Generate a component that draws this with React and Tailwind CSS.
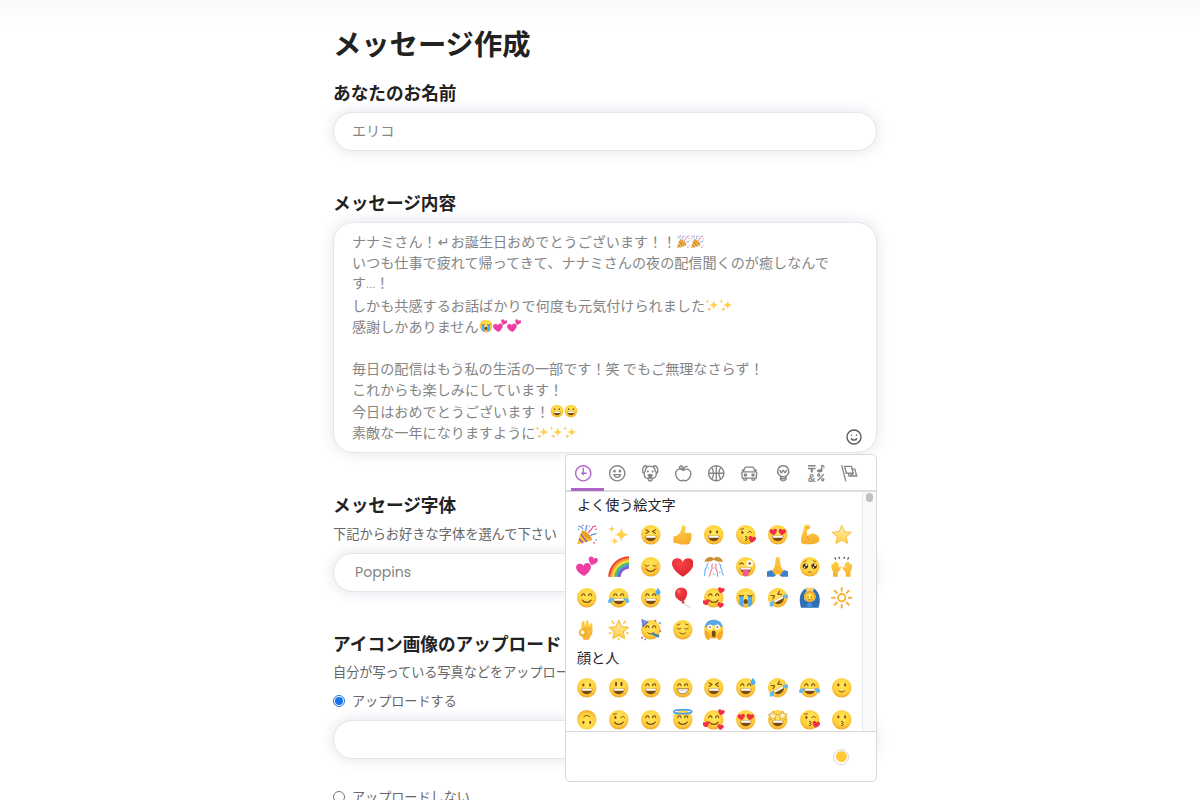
import { useState } from 'react';
import clsx from 'clsx';

const INK = '#7a4a0e';
const HEART = 'M0 5.200C-8 .3-6.500-4.800-3-4.800-1.500-4.800-.4-4 0-2.800.4-4 1.500-4.800 3-4.800 6.500-4.800 8 .3 0 5.200z';
const STAR = 'M16 2l4.100 9.300 10.200 1.100-7.600 6.800 2.100 9.900L16 24l-8.800 5.100 2.100-9.900-7.600-6.800 10.200-1.100z';

function Heart({ x, y, s = 1, r = 0, fill = '#ee2f45' }) {
  return <path d={HEART} fill={fill} transform={`translate(${x} ${y}) rotate(${r}) scale(${s})`} />;
}

function Line({ d, w = 1.6, color = INK }) {
  return <path d={d} fill="none" stroke={color} strokeWidth={w} strokeLinecap="round" strokeLinejoin="round" />;
}

const eyes = {
  dots: (
    <g fill={INK}>
      <ellipse cx="11" cy="12" rx="1.6" ry="2.2" />
      <ellipse cx="21" cy="12" rx="1.6" ry="2.2" />
    </g>
  ),
  tall: (
    <g fill={INK}>
      <ellipse cx="12" cy="10.5" rx="1.6" ry="3.6" />
      <ellipse cx="20" cy="10.5" rx="1.6" ry="3.6" />
    </g>
  ),
  happy: <Line d="M8.500 13c1-4 4-4 5 0M18.500 13c1-4 4-4 5 0" />,
  closed: <Line d="M7.500 13.500c1.500 2.400 4.500 2.400 6 0M18.500 13.500c1.500 2.400 4.500 2.400 6 0" w={1.4} />,
  squint: <Line d="M9 8.500l4.500 2.700L9 14M23 8.500l-4.500 2.700L23 14" />,
  wink: (
    <g>
      <ellipse cx="11" cy="12.500" rx="1.600" ry="2.200" fill={INK} />
      <Line d="M19 13c1.500-2.500 4-2.500 5.500-.5M8.500 8l4-1" w={1.4} />
    </g>
  ),
  hearts: (
    <g>
      <Heart x={9.5} y={12} s={0.95} r={-8} />
      <Heart x={22.5} y={12} s={0.95} r={8} />
    </g>
  ),
  stars: (
    <g fill="#fff3c4" stroke="#c98a20" strokeWidth="2">
      <path d={STAR} transform="translate(1 2) scale(.48)" />
      <path d={STAR} transform="translate(15.500 2) scale(.48)" />
    </g>
  ),
};

const mouths = {
  grin: (
    <g>
      <path d="M7.500 17.500h17c0 4.500-3.500 8-8.500 8s-8.500-3.500-8.500-8z" fill={INK} />
      <path d="M8.500 17.500h15v3h-15z" fill="#fff" />
    </g>
  ),
  teeth: (
    <path d="M7.500 17.500h17c0 4.500-3.500 7.500-8.500 7.500s-8.500-3-8.500-7.500z" fill="#fff" stroke={INK} strokeWidth="1" />
  ),
  smile: <Line d="M9.500 19.500c3 4.500 10 4.500 13 0" />,
  small: <Line d="M11.500 20.500c2 2.500 7 2.500 9 0" w={1.4} />,
  kiss: <Line d="M15.500 18.500c3.500 0 3.500 2.500.5 3 3 .5 3 3-.5 3.200" w={1.4} />,
};

function Face({ eye, mouth, flip, children }) {
  return (
    <g>
      <g transform={flip ? 'rotate(180 16 16)' : undefined}>
        <circle cx="16" cy="16" r="14.500" fill="url(#face)" />
        {eyes[eye]}
        {mouths[mouth]}
      </g>
      {children}
    </g>
  );
}

function Tears() {
  return (
    <g fill="#62b8f2">
      <path d="M8.500 16.500c-5-.5-8.700 2-8.500 5 .2 3 5 3 6.300.5z" />
      <path d="M23.500 16.500c5-.5 8.700 2 8.500 5-.2 3-5 3-6.300.5z" />
    </g>
  );
}

function Sparkle({ x, y, s }) {
  return (
    <path
      d="M0-10C1-3 3-1 10 0 3 1 1 3 0 10-1 3-3 1-10 0-3-1-1-3 0-10z"
      fill="#ffcf4d"
      transform={`translate(${x} ${y}) scale(${s})`}
    />
  );
}

const emojis = {
  '😀': <Face eye="dots" mouth="grin" />,
  '😃': <Face eye="tall" mouth="grin" />,
  '😄': <Face eye="happy" mouth="grin" />,
  '😁': (
    <Face eye="happy" mouth="teeth">
      <Line d="M8.500 20.500h15" w={0.8} color="#c8b79d" />
    </Face>
  ),
  '😆': <Face eye="squint" mouth="grin" />,
  '😅': (
    <Face eye="happy" mouth="grin">
      <path d="M26.500 1c3 4 4.500 6 4 8-1 4-7 3.500-7.500 0-.2-2 1.500-4 3.500-8z" fill="#4eb0f2" />
    </Face>
  ),
  '😂': (
    <Face eye="happy" mouth="grin">
      <Tears />
    </Face>
  ),
  '🤣': (
    <g transform="rotate(-28 16 16)">
      <Face eye="squint" mouth="grin" />
      <Tears />
    </g>
  ),
  '🙂': <Face eye="dots" mouth="small" />,
  '🙃': <Face eye="dots" mouth="small" flip />,
  '😉': <Face eye="wink" mouth="smile" />,
  '😊': <Face eye="happy" mouth="smile" />,
  '☺️': (
    <Face eye="closed" mouth="smile">
      <g fill="#f58b45" opacity=".55">
        <circle cx="7.500" cy="18.500" r="2.600" />
        <circle cx="24.500" cy="18.500" r="2.600" />
      </g>
    </Face>
  ),
  '😌': (
    <Face eye="closed" mouth="small">
      <Line d="M8 9l4-1.500M24 9l-4-1.500" w={1.2} />
    </Face>
  ),
  '😇': (
    <Face eye="happy" mouth="smile">
      <ellipse cx="16" cy="4" rx="13.500" ry="3" fill="none" stroke="#4a9fe8" strokeWidth="2.500" />
    </Face>
  ),
  '🥰': (
    <Face eye="happy" mouth="smile">
      <Heart x={27} y={5} s={0.85} r={15} />
      <Heart x={4.5} y={23} s={0.85} r={-15} />
      <Heart x={26} y={27} s={0.8} r={10} />
    </Face>
  ),
  '😍': <Face eye="hearts" mouth="grin" />,
  '🤩': <Face eye="stars" mouth="grin" />,
  '😘': (
    <Face eye="wink" mouth="kiss">
      <Heart x={25.5} y={23} s={0.95} r={10} />
    </Face>
  ),
  '😗': <Face eye="dots" mouth="kiss" />,
  '😜': (
    <Face mouth="grin">
      <Line d="M7 12c1.500-2 4-2 5.500 0" />
      <circle cx="22" cy="11" r="4.800" fill="#fff" />
      <circle cx="22" cy="11" r="1.800" fill={INK} />
      <path d="M11.500 20h9v6.500c0 5-9 5-9 0z" fill="#f15b8e" />
    </Face>
  ),
  '🥺': (
    <Face>
      <g fill="#4f2e12">
        <circle cx="9.500" cy="15" r="4" />
        <circle cx="22.500" cy="15" r="4" />
      </g>
      <g fill="#fff">
        <circle cx="11" cy="13.300" r="1.500" />
        <circle cx="24" cy="13.300" r="1.500" />
        <circle cx="8.300" cy="16.800" r="1" />
        <circle cx="21.300" cy="16.800" r="1" />
      </g>
      <Line d="M7 8.500c2-.3 3-1 4-2M25 8.500c-2-.3-3-1-4-2M13.500 24.500c1.500-1.500 3.500-1.500 5 0" w={1.3} />
    </Face>
  ),
  '😭': (
    <Face>
      <path d="M6.500 13.500h6v16c-3-.5-6-3-6-6zM19.500 13.500h6v10c0 3-3 5.500-6 6z" fill="#4eaaf0" />
      <Line d="M6.500 12.500c2 1 4.500 1 6.500 0M19 12.500c2 1 4.500 1 6.500 0" />
      <ellipse cx="16" cy="21.500" rx="3.300" ry="3.800" fill={INK} />
    </Face>
  ),
  '🥳': (
    <Face eye="happy" mouth="small">
      <path d="M2 0l11 4-9 9z" fill="#5c6fd6" />
      <path d="M3.500 4l5-1.500M3.500 8l6.500-4" stroke="#9aa8f0" strokeWidth="1.500" />
      <path d="M18 20l11 4-1 4-11-5z" fill="#3f7fc4" />
      <g fill="#e84d6c">
        <circle cx="23" cy="2.500" r="1.500" />
        <circle cx="3" cy="28" r="1.500" />
        <circle cx="30" cy="18" r="1.300" />
      </g>
      <g fill="#3f9be0">
        <circle cx="29.500" cy="6" r="1.500" />
        <circle cx="8" cy="30.500" r="1.300" />
      </g>
    </Face>
  ),
  '😱': (
    <g>
      <circle cx="16" cy="15" r="14" fill="url(#face)" />
      <path d="M2.500 13C4 4 9 1 16 1s12 3 13.500 12c-6-5-21-5-27 0z" fill="#5aa8e6" />
      <circle cx="10.500" cy="12" r="3.800" fill="#fff" />
      <circle cx="21.500" cy="12" r="3.800" fill="#fff" />
      <circle cx="10.500" cy="12" r="1.300" fill={INK} />
      <circle cx="21.500" cy="12" r="1.300" fill={INK} />
      <ellipse cx="16" cy="22" rx="3" ry="5" fill={INK} />
      <path d="M2 18c3-1 7 2 8 6v7H6c-3-3-4-8-4-13zM30 18c-3-1-7 2-8 6v7h4c3-3 4-8 4-13z" fill="#f5ac27" />
    </g>
  ),
  '🎉': (
    <g>
      <path d="M1.500 30.500L8.500 10C16 12 21 17 23.500 24z" fill="#fbbd35" />
      <path d="M7 15l9.500 11.500M4.500 22l6 6.500" stroke="#7a4fc0" strokeWidth="1.800" />
      <path d="M8.500 10c4-2 16 8 15 14-5 0-14-7-15-14z" fill="#e8a02a" />
      <Line d="M14 10c3-2 0-5 2-8" w={1.8} color="#5b8fe8" />
      <Line d="M19 13c0-4 4-3 5-7s4-2 5-3" w={1.8} color="#e8497c" />
      <Line d="M22 17c3-3 5 0 8-3" w={1.8} color="#5b8fe8" />
      <Line d="M4 3c3 0 4 2 6 4" w={1.8} color="#3f9be8" />
      <g fill="#4aa5ef">
        <circle cx="20" cy="3" r="1.200" />
        <circle cx="4" cy="8" r="1.200" />
        <circle cx="30" cy="24" r="1.200" />
      </g>
      <g fill="#ef4c62">
        <circle cx="27" cy="28" r="1.300" />
        <circle cx="10" cy="2" r="1.200" />
        <circle cx="30" cy="8" r="1.200" />
      </g>
    </g>
  ),
  '✨': (
    <g>
      <Sparkle x={20} y={16} s={1.15} />
      <Sparkle x={5.500} y={7.500} s={0.55} />
      <Sparkle x={10} y={25.500} s={0.6} />
    </g>
  ),
  '👍': (
    <g>
      <path
        d="M2 18.500l5.500-1.500c3-2 5-5 6.500-9l1.500-6c3-1 5 1 4.800 4.500L19 13h7.500c3.500 0 4 3.500 1.800 4.700 1.700 1.500 1.200 4-.5 4.700 1.200 1.700.4 3.800-1.300 4.400.3 2.200-1 3.700-3.500 3.700h-8.500c-3 0-5-1.500-7.500-2L2 28z"
        fill="url(#hand)"
      />
      <Line d="M20.500 17.700h7M21 22.300h6M20.500 26.700h5.500" w={0.9} color="#e09a25" />
    </g>
  ),
  '💪': (
    <g>
      <path
        d="M7 8c-.5-3.500 1-6.500 4-7 3.500-.5 6 1.500 5.500 5-.5 2.500-3.500 2-4.500 3.500-.5 3 .5 6 .5 9 4-4.500 9-5.500 13.500-2.500 4.500 3 5 7 3.500 10.500-6 4.500-17 4.500-25.500 2.500C1.500 23 4.500 15.500 7 8z"
        fill="url(#hand)"
      />
      <Line d="M12.500 18.500c-.3 2 .5 3.500 2 4.500M11 6c2-1 3-1 4-.5" w={1.1} color="#dd9524" />
    </g>
  ),
  '⭐': <path d={STAR} fill="url(#star)" stroke="#f4bd48" strokeWidth="1.400" strokeLinejoin="round" />,
  '🌟': (
    <g>
      <path d={STAR} fill="url(#star)" stroke="#f9c03c" strokeWidth="1.800" strokeLinejoin="round" />
      <Line d="M6 3l2.500 3.500M26 3l-2.500 3.500M16 28.500v2.500M2 21.500l2.500-1M30 21.500l-2.500-1" w={2} color="#ffb93a" />
    </g>
  ),
  '💕': (
    <g>
      <Heart x={11.5} y={20} s={1.9} r={-5} fill="#ee3fa5" />
      <Heart x={25} y={7.500} s={1.2} r={18} fill="#ee3fa5" />
    </g>
  ),
  '🌈': (
    <g fill="none" strokeWidth="3.400">
      <path d="M2 31C3 14 15 3 31.500 2" stroke="#ed4237" />
      <path d="M5 31C6 16 17 6 31.500 5" stroke="#f99a2b" />
      <path d="M8 31C9 18 19 9 31.500 8" stroke="#fbdd3e" />
      <path d="M11 31c1-11 9-19 20.500-20" stroke="#54bd55" />
      <path d="M14 31c1-9 8-16 17.500-17" stroke="#3f91e5" />
      <path d="M17 31c1-8 6-13 14.500-14" stroke="#8c57c7" />
    </g>
  ),
  '❤️': <Heart x={16} y={16.5} s={2.75} fill="url(#heart)" />,
  '🎊': (
    <g>
      <path d="M2 8c2-5 7-8 12-6l2 2 2-2c5-2 10 1 12 6-4 1-8 1-11-1l-3-1-3 1c-3 2-7 2-11 1z" fill="#c9923a" />
      <Line d="M8 11c-4 3-1 5-4 8s0 6-2 10M24 11c4 3 1 5 3 8s1 6 3 9" w={1.7} color="#6cb2f0" />
      <Line d="M14 12c-3 4 2 6-2 10-2 2 0 5-3 8M19 12c2 4-2 6 1 9s0 6 2 9" w={1.7} color="#f07a92" />
      <g fill="#9fb9e0">
        <circle cx="16" cy="18" r="1.200" />
        <circle cx="16" cy="27" r="1.300" />
        <circle cx="25" cy="24" r="1.200" />
        <circle cx="8" cy="18" r="1.200" />
      </g>
    </g>
  ),
  '🙏': (
    <g>
      <path
        d="M15.800 1c-1.800 0-2.600 1-2.800 3l-1.500 11-4.500 9 5 6 3.800-4zM16.200 1c1.800 0 2.600 1 2.800 3l1.500 11 4.500 9-5 6-3.800-4z"
        fill="url(#hand)"
      />
      <path d="M15.700 3h.6v23h-.6z" fill="#d98f20" />
      <path d="M0 23l7-2 5.500 8-2 2H0zM32 23l-7-2-5.500 8 2 2H32z" fill="#3b82c9" />
    </g>
  ),
  '🙌': (
    <g>
      <g fill="url(#hand)">
        <path d="M1 12c1-1 2 0 2.500 1L4 10c1-2 2.500-1 2.500.5V9C8 7.500 9 8.500 9 10v1c1.500-1.500 2.500 0 2.500 1.500V18l2-2c1.500-.5 2 .5 1.500 2-1.500 3-3 5-5 6v7H3v-8c-3-4-2.500-7-2-11z" />
        <path d="M31 12c-1-1-2 0-2.500 1L28 10c-1-2-2.500-1-2.500.5V9C24 7.500 23 8.500 23 10v1c-1.500-1.500-2.500 0-2.500 1.500V18l-2-2c-1.500-.5-2 .5-1.500 2 1.500 3 3 5 5 6v7h7v-8c3-4 2.500-7 2-11z" />
      </g>
      <Line d="M7 4.500L6 2.800M12.500 3.500L12 1.800M19.500 3.500l.5-1.700M25 4.500l1-1.700" w={1.8} color="#444" />
    </g>
  ),
  '🎈': (
    <g>
      <path d="M14 1c6 0 9 4 8.500 9.500C22 16 18.500 20.500 16 22 9 20 4 15 4.500 9.500 5 4 8 1 14 1z" fill="url(#heart)" />
      <path d="M14.500 21.500h3.500l1 2.500h-4z" fill="#cf1f2e" />
      <Line d="M17 24c3 1 2 4 5 4s4 1 5 3" w={1.1} color="#b9b9b9" />
      <ellipse cx="10" cy="6.500" rx="2" ry="2.800" fill="#ff9a94" opacity=".6" />
    </g>
  ),
  '🙆': (
    <g>
      <path d="M10 2C1 8-1 18 3 31h26c4-13 2-23-7-29l-2 4c5 4 6 9 3 14H9C6 15 7 10 12 6z" fill="#2f6fb5" />
      <circle cx="16" cy="14" r="8.500" fill="#e3a32c" />
      <circle cx="16" cy="15.500" r="6.800" fill="url(#face)" />
      <path d="M9 3c1-3 4-3 7-1 3-2 6-2 7 1l-3 3h-8z" fill="#fbcf6a" />
      <path d="M12 26l4-4 4 4v5h-8z" fill="#4990d9" />
      <circle cx="13.500" cy="15" r="1" fill={INK} />
      <circle cx="18.500" cy="15" r="1" fill={INK} />
      <Line d="M13.500 18.500c1.500 1.300 3.500 1.300 5 0" w={1} />
    </g>
  ),
  '🔆': (
    <g>
      <circle cx="16" cy="16" r="5.500" fill="none" stroke="#f6b03c" strokeWidth="2.800" />
      <Line
        d="M16 1.500v4M16 26.500v4M1.500 16h4M26.500 16h4M5.700 5.700l3 3M23.300 23.300l3 3M5.700 26.300l3-3M23.300 8.700l3-3"
        w={3}
        color="#f6b03c"
      />
    </g>
  ),
  '👌': (
    <g>
      <path
        d="M9 14C7 9 8.500 4 10.500 2.500c2-.5 2 2 2.500 5l1.500 5C14 8 14.500 3 16.500 1.500c2-.5 2 3 2.500 6l.5 5c.5-3 1.500-6 3.500-6.500 2 .5 1 4 1.500 8 .5 5 0 9-3 12L19 31h-8l-1-4c-3-1-6-3-6-6.500C4 16 7 14.500 9 14z"
        fill="url(#hand)"
      />
      <circle cx="9.800" cy="20" r="2.600" fill="#fff" />
      <Line d="M9 14c3 0 6 1.500 6.500 4 .3 3-1 6-4 7M14.500 12.500l1 3M19.500 12.500l-.3 3" w={0.9} color="#dd9524" />
    </g>
  ),
};

function Emoji({ name, className }) {
  return (
    <svg viewBox="0 0 32 32" role="img" aria-label={name} className={className}>
      {emojis[name]}
    </svg>
  );
}

function EmojiDefs() {
  return (
    <svg className="absolute size-0" aria-hidden="true">
      <defs>
        <radialGradient id="face" cx=".5" cy=".38" r=".66">
          <stop offset="0" stopColor="#ffe85c" />
          <stop offset=".65" stopColor="#ffd03c" />
          <stop offset="1" stopColor="#ee9d26" />
        </radialGradient>
        <linearGradient id="hand" x1="0" y1="0" x2="0" y2="1">
          <stop offset="0" stopColor="#ffd04a" />
          <stop offset="1" stopColor="#f7ad2c" />
        </linearGradient>
        <linearGradient id="star" x1="0" y1="0" x2="0" y2="1">
          <stop offset="0" stopColor="#fff0b0" />
          <stop offset="1" stopColor="#ffce48" />
        </linearGradient>
        <radialGradient id="heart" cx=".4" cy=".3" r=".8">
          <stop offset="0" stopColor="#fa4446" />
          <stop offset="1" stopColor="#d81f2c" />
        </radialGradient>
      </defs>
    </svg>
  );
}

const RING =
  'M12 0C5.373 0 0 5.373 0 12s5.373 12 12 12 12-5.373 12-12S18.627 0 12 0m0 22C6.486 22 2 17.514 2 12S6.486 2 12 2s10 4.486 10 10-4.486 10-10 10';

const tabs = [
  { id: 'recent', icon: <path d={`M13 4h-2l-.001 7H9v2h2v2h2v-2h4v-2h-4z${RING}`} /> },
  {
    id: 'people',
    icon: (
      <path
        d={`${RING}M8 7a2 2 0 1 0-.001 3.999A2 2 0 0 0 8 7M16 7a2 2 0 1 0-.001 3.999A2 2 0 0 0 16 7M15.232 15c-.693 1.195-1.87 2-3.349 2-1.477 0-2.655-.805-3.347-2H15m3-2H6a6 6 0 1 0 12 0`}
      />
    ),
  },
  {
    id: 'nature',
    icon: (
      <g>
        <path d="M15.5 8a1.5 1.5 0 1 0 .001 3.001A1.5 1.5 0 0 0 15.5 8M8.5 8a1.5 1.5 0 1 0 .001 3.001A1.5 1.5 0 0 0 8.5 8" />
        <path d="M18.933 0h-.027c-.97 0-2.138.787-3.018 1.497-1.274-.374-2.612-.51-3.887-.51-1.285 0-2.616.133-3.874.517C7.245.79 6.069 0 5.093 0h-.027C3.352 0 .07 2.67.002 7.026c-.039 2.479.276 4.238 1.04 5.013.254.258.882.677 1.295.882.191 3.177.922 5.238 2.536 6.38.897.637 2.187.949 3.2 1.102C8.04 20.6 8 20.795 8 21c0 1.773 2.35 3 4 3 1.648 0 4-1.227 4-3 0-.201-.038-.393-.072-.586 2.573-.385 5.435-1.877 5.925-7.587.396-.22.887-.568 1.104-.788.763-.774 1.079-2.534 1.04-5.013C23.929 2.67 20.646 0 18.933 0M3.223 9.135c-.237.281-.837 1.155-.884 1.238-.15-.41-.368-1.349-.337-3.291.051-3.281 2.478-4.972 3.091-5.031.256.015.731.27 1.265.646-1.11 1.171-2.275 2.915-2.352 5.125-.133.546-.398.858-.783 1.313M12 22c-.901 0-1.954-.693-2-1 0-.654.475-1.236 1-1.602V20a1 1 0 1 0 2 0v-.602c.524.365 1 .947 1 1.602-.046.307-1.099 1-2 1m3-3.48v.02a4.752 4.752 0 0 0-1.262-1.02c1.092-.516 2.239-1.334 2.239-2.217 0-1.842-1.781-2.195-3.977-2.195-2.196 0-3.978.354-3.978 2.195 0 .883 1.148 1.701 2.238 2.217A4.8 4.8 0 0 0 9 18.539v-.025c-1-.076-2.182-.281-2.973-.842-1.301-.92-1.838-3.045-1.853-6.478l.023-.041c.496-.826 1.49-1.45 1.804-3.102 0-2.047 1.357-3.631 2.362-4.522C9.37 3.178 10.555 3 11.948 3c1.447 0 2.685.192 3.733.57 1 .9 2.316 2.465 2.316 4.48.313 1.651 1.307 2.275 1.803 3.102.035.058.068.117.102.178-.059 5.967-1.949 7.01-4.902 7.19m6.628-8.202c-.037-.065-.074-.13-.113-.195a7.587 7.587 0 0 0-.739-.987c-.385-.455-.648-.768-.782-1.313-.076-2.209-1.241-3.954-2.353-5.124.531-.376 1.004-.63 1.261-.647.636.071 3.044 1.764 3.096 5.031.027 1.81-.347 3.218-.37 3.235" />
      </g>
    ),
  },
  {
    id: 'foods',
    icon: (
      <path d="M17 4.978c-1.838 0-2.876.396-3.68.934.513-1.172 1.768-2.934 4.68-2.934a1 1 0 0 0 0-2c-2.921 0-4.629 1.365-5.547 2.512-.064.078-.119.162-.18.244C11.73 1.838 10.798.023 9.207.023 8.579.022 7.85.306 7 .978 5.027 2.54 5.329 3.902 6.492 4.999 3.609 5.222 0 7.352 0 12.969c0 4.582 4.961 11.009 9 11.009 1.975 0 2.371-.486 3-1 .629.514 1.025 1 3 1 4.039 0 9-6.418 9-11 0-5.953-4.055-8-7-8M8.242 2.546c.641-.508.943-.523.965-.523.426.169.975 1.405 1.357 3.055-1.527-.629-2.741-1.352-2.98-1.846.059-.112.241-.356.658-.686M15 21.978c-1.08 0-1.21-.109-1.559-.402l-.176-.146c-.367-.302-.816-.452-1.266-.452s-.898.15-1.266.452l-.176.146c-.347.292-.477.402-1.557.402-2.813 0-7-5.389-7-9.009 0-5.823 4.488-5.991 5-5.991 1.939 0 2.484.471 3.387 1.251l.323.276a1.995 1.995 0 0 0 2.58 0l.323-.276c.902-.78 1.447-1.251 3.387-1.251.512 0 5 .168 5 6 0 3.617-4.187 9-7 9" />
    ),
  },
  {
    id: 'activity',
    icon: (
      <path d="M12 0C5.373 0 0 5.372 0 12c0 6.627 5.373 12 12 12 6.628 0 12-5.373 12-12 0-6.628-5.372-12-12-12m9.949 11H17.05c.224-2.527 1.232-4.773 1.968-6.113A9.966 9.966 0 0 1 21.949 11M13 11V2.051a9.945 9.945 0 0 1 4.432 1.564c-.858 1.491-2.156 4.22-2.392 7.385H13zm-2 0H8.961c-.238-3.165-1.536-5.894-2.393-7.385A9.95 9.95 0 0 1 11 2.051V11zm0 2v8.949a9.937 9.937 0 0 1-4.432-1.564c.857-1.492 2.155-4.221 2.393-7.385H11zm4.04 0c.236 3.164 1.534 5.893 2.392 7.385A9.92 9.92 0 0 1 13 21.949V13h2.04zM4.982 4.887C5.718 6.227 6.726 8.473 6.951 11h-4.9a9.977 9.977 0 0 1 2.931-6.113M2.051 13h4.9c-.226 2.527-1.233 4.771-1.969 6.113A9.972 9.972 0 0 1 2.051 13m16.967 6.113c-.735-1.342-1.744-3.586-1.968-6.113h4.899a9.961 9.961 0 0 1-2.931 6.113" />
    ),
  },
  {
    id: 'places',
    icon: (
      <g>
        <path d="M6.5 12C5.122 12 4 13.121 4 14.5S5.122 17 6.5 17 9 15.879 9 14.5 7.878 12 6.5 12m0 3c-.275 0-.5-.225-.5-.5s.225-.5.5-.5.5.225.5.5-.225.5-.5.5M17.5 12c-1.378 0-2.5 1.121-2.5 2.5s1.122 2.5 2.5 2.5 2.5-1.121 2.5-2.5-1.122-2.5-2.5-2.5m0 3c-.275 0-.5-.225-.5-.5s.225-.5.5-.5.5.225.5.5-.225.5-.5.5" />
        <path d="M22.482 9.494l-1.039-.346L21.4 9h.6c.552 0 1-.439 1-.992 0-.006-.003-.008-.003-.008H23c0-1-.889-2-1.984-2h-.642l-.731-1.717C19.262 3.012 18.091 2 16.764 2H7.236C5.909 2 4.738 3.012 4.357 4.283L3.626 6h-.642C1.889 6 1 7 1 8h.003S1 8.002 1 8.008C1 8.561 1.448 9 2 9h.6l-.043.148-1.039.346a2.001 2.001 0 0 0-1.359 2.097l.751 7.508a1 1 0 0 0 .994.901H3v1c0 1.103.896 2 2 2h2c1.104 0 2-.897 2-2v-1h6v1c0 1.103.896 2 2 2h2c1.104 0 2-.897 2-2v-1h1.096a.999.999 0 0 0 .994-.901l.751-7.508a2.001 2.001 0 0 0-1.359-2.097M6.273 4.857C6.402 4.43 6.788 4 7.236 4h9.527c.448 0 .834.43.963.857L19.313 9H4.688l1.585-4.143zM7 21H5v-1h2v1zm12 0h-2v-1h2v1zm2.189-3H2.811l-.662-6.607L3 11h18l.852.393L21.189 18z" />
      </g>
    ),
  },
  {
    id: 'objects',
    icon: (
      <g>
        <path d="M12 0a9 9 0 0 0-5 16.482V21s2.035 3 5 3 5-3 5-3v-4.518A9 9 0 0 0 12 0zm0 2c3.86 0 7 3.141 7 7s-3.14 7-7 7-7-3.141-7-7 3.14-7 7-7zM9 17.477c.94.332 1.946.523 3 .523s2.06-.19 3-.523v.834c-.91.436-1.925.689-3 .689a6.924 6.924 0 0 1-3-.69v-.833zm.236 3.07A8.854 8.854 0 0 0 12 21c.965 0 1.888-.167 2.758-.451C14.155 21.173 13.153 22 12 22c-1.102 0-2.117-.789-2.764-1.453z" />
        <path
          d="M7 8c2 0 1 3.400 2.300 3.400S10.500 8 12 8s1.500 3.400 2.700 3.400S15 8 17 8"
          fill="none"
          stroke="currentColor"
          strokeWidth="1.900"
          strokeLinecap="round"
        />
      </g>
    ),
  },
  {
    id: 'symbols',
    icon: (
      <g>
        <path d="M0 0h11v2H0zM0 4h11v2H7v5H4V6H0z" />
        <path d="M17 11c2.209 0 4-1.119 4-2.500V2s.985-.161 1.498.949C23.01 4.055 23 6 23 6s1-1.119 1-3.135C24-.02 21 0 21 0h-2v6.347A5.853 5.853 0 0 0 17 6c-2.209 0-4 1.119-4 2.500s1.791 2.500 4 2.500" />
        <text x="-.5" y="24" fontSize="15.500" fontWeight="700" fontFamily="Liberation Sans, sans-serif">
          &amp;
        </text>
        <path d="M22.800 13.500l-9 9.500" fill="none" stroke="currentColor" strokeWidth="2" />
        <circle cx="15.500" cy="14.500" r="1.600" fill="none" stroke="currentColor" strokeWidth="1.800" />
        <circle cx="21.500" cy="21.500" r="1.600" fill="none" stroke="currentColor" strokeWidth="1.800" />
      </g>
    ),
  },
  {
    id: 'flags',
    icon: (
      <path d="M0 0l6.084 24H8L1.916 0zM21 5h-4l-1-4H4l3 12h3l1 4h13L21 5zM6.563 3h7.875l2 8H8.563l-2-8zm8.832 10l-2.856 1.904L12.063 13h3.332zM19 13l-1.500-6h1.938l2 8H16l3-2z" />
    ),
  },
];

const recent = [
  '🎉', '✨', '😆', '👍', '😀', '😘', '😍', '💪', '⭐',
  '💕', '🌈', '☺️', '❤️', '🎊', '😜', '🙏', '🥺', '🙌',
  '😊', '😂', '😅', '🎈', '🥰', '😭', '🤣', '🙆', '🔆',
  '👌', '🌟', '🥳', '😌', '😱',
];

const people = [
  '😀', '😃', '😄', '😁', '😆', '😅', '🤣', '😂', '🙂',
  '🙃', '😉', '😊', '😇', '🥰', '😍', '🤩', '😘', '😗',
];

// each entry is a line: text followed by the emojis that close it
const message = [
  [
    <>
      ナナミさん！<span className="inline-block w-[14px] text-center font-['DejaVu_Sans']">↵</span>
      お誕生日おめでとうございます！！
    </>,
    '🎉',
    '🎉',
  ],
  ['いつも仕事で疲れて帰ってきて、ナナミさんの夜の配信聞くのが癒しなんで'],
  [
    <>
      す<span className="font-['Liberation_Sans'] text-[11px]">...</span>！
    </>,
  ],
  ['しかも共感するお話ばかりで何度も元気付けられました', '✨', '✨'],
  ['感謝しかありません', '😭', '💕', '💕'],
  [''],
  ['毎日の配信はもう私の生活の一部です！笑 でもご無理なさらず！'],
  ['これからも楽しみにしています！'],
  ['今日はおめでとうございます！', '😀', '😀'],
  ['素敵な一年になりますように', '✨', '✨', '✨'],
];

function Category({ title, items }) {
  return (
    <section>
      <h3 className="h-[26px] pl-[11px] text-[14.1px] leading-[23px] text-[#222427]">{title}</h3>
      <div className="grid grid-cols-[repeat(9,31.8px)] pl-[5px]">
        {items.map((name) => (
          <button key={name} type="button" className="flex h-[31.7px] items-center justify-center">
            <Emoji name={name} className="size-[21.5px]" />
          </button>
        ))}
      </div>
    </section>
  );
}

function EmojiPicker() {
  const [active, setActive] = useState('recent');

  return (
    <div className="absolute top-[231px] right-[-1px] z-10 flex h-[328px] w-[312px] flex-col overflow-hidden rounded-[5px] border border-[#d9d9d9] bg-white">
      <div className="relative flex h-[37px] shrink-0 border-b-2 border-[#dddddd] pr-[10px] pl-px">
        {tabs.map((tab) => (
          <button
            key={tab.id}
            type="button"
            onClick={() => setActive(tab.id)}
            className={clsx(
              'flex flex-1 items-center justify-center pt-px',
              active === tab.id ? 'text-[#ae65c5]' : 'text-[#858585]'
            )}
          >
            <svg viewBox="0 0 24 24" fill="currentColor" className="size-[16.5px] overflow-visible">
              {tab.icon}
            </svg>
          </button>
        ))}
        <span className="absolute bottom-[-1px] left-[5px] h-[3px] w-[33px] bg-[#ae65c5]" />
      </div>

      <div className="flex h-[239px] shrink-0 overflow-hidden">
        <div className="flex-1 pt-px">
          <Category title="よく使う絵文字" items={recent} />
          <Category title="顔と人" items={people} />
        </div>
        <div className="flex w-[14px] justify-center border-l border-[#ebebeb] bg-[#fafafa] pt-px">
          <span className="h-[9px] w-[7px] rounded-full bg-[#c1c1c1]" />
        </div>
      </div>

      <div className="flex flex-1 items-center justify-end border-t border-[#d9d9d9] pr-[27px]">
        <span className="flex size-4 items-center justify-center rounded-full border border-[#d9d9d9]">
          <span className="size-[11px] rounded-full bg-[#ffc93a]" />
        </span>
      </div>
    </div>
  );
}

function Field({ children }) {
  return (
    <div className="flex h-[39px] items-center rounded-full border border-[#e5e5ea] bg-white px-[18px] pb-0.5 text-[14.1px] text-[#858585] shadow-[0_0_14px_rgba(90,90,150,0.17)]">
      {children}
    </div>
  );
}

function Title({ children }) {
  return <h2 className="pb-0.5 text-[17.65px] leading-6 font-bold text-[#222222]">{children}</h2>;
}

function Radio({ label, checked }) {
  return (
    <label className="flex h-5 items-center text-[13.1px] text-[#666666]">
      <span
        className={clsx(
          'mr-[7px] flex size-3 items-center justify-center rounded-full border bg-white',
          checked ? 'border-[#1a73e8]' : 'border-[#767676]'
        )}
      >
        {checked && <span className="size-2 rounded-full bg-[#1a73e8]" />}
      </span>
      {label}
    </label>
  );
}

export default function App() {
  return (
    <main className="h-[800px] overflow-hidden bg-white bg-linear-to-b from-[#f9f9f9] to-white to-[28px] font-['Noto_Sans_CJK_JP',sans-serif]">
      <EmojiDefs />
      <form className="ml-[333px] w-[544px] pt-[23px]">
        <h1 className="text-[28.3px] leading-10 font-bold text-[#222222]">メッセージ作成</h1>

        <div className="mt-[18px] space-y-[5px]">
          <Title>あなたのお名前</Title>
          <Field>エリコ</Field>
        </div>

        <div className="mt-10 space-y-[5px]">
          <Title>メッセージ内容</Title>
          <div className="relative h-[231px] rounded-[20px] border border-[#e5e5ea] bg-white px-[18px] pt-2 text-[14.12px] leading-[21.2px] text-[#858585] shadow-[0_0_14px_rgba(90,90,150,0.17)]">
            {message.map(([text, ...icons], i) => (
              <p key={i} className="flex h-[21.2px] items-center whitespace-nowrap">
                <span>{text}</span>
                {icons.map((name, j) => (
                  <Emoji key={j} name={name} className="size-[14px]" />
                ))}
              </p>
            ))}
            <svg
              viewBox="0 0 24 24"
              fill="none"
              stroke="currentColor"
              strokeWidth="2"
              strokeLinecap="round"
              className="absolute right-[14px] bottom-[7px] size-4 text-[#555555]"
            >
              <circle cx="12" cy="12" r="10.500" />
              <path d="M8 14.500c1.500 3 6.500 3 8 0M8.300 9.300v.2M15.700 9.300v.2" />
            </svg>
            <EmojiPicker />
          </div>
        </div>

        <div className="mt-10">
          <Title>メッセージ字体</Title>
          <p className="mt-[5px] mb-[9px] text-[13.22px] leading-5 text-[#666666]">下記からお好きな字体を選んで下さい</p>
          <Field>
            <span className="mt-[3px] ml-[3px] font-[Poppins,Inter,sans-serif] text-[14.1px]">Poppins</span>
          </Field>
        </div>

        <div className="mt-10">
          <Title>アイコン画像のアップロード</Title>
          <p className="mt-1 mb-[9px] w-[233px] overflow-hidden text-[13.15px] leading-5 whitespace-nowrap text-[#666666]">
            自分が写っている写真などをアップロー
          </p>
          <Radio label="アップロードする" checked />
          <div className="mt-[9px] mb-7">
            <Field />
          </div>
          <Radio label="アップロードしない" />
        </div>
      </form>
    </main>
  );
}
